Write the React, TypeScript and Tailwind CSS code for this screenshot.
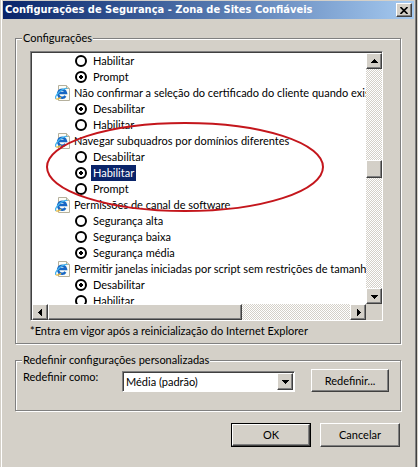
import type { ReactNode } from "react";

type Option = { label: string; checked?: boolean; selected?: boolean };
type Setting = { id: string; title?: string; options: Option[] };

const settings: Setting[] = [
    {
        id: "anterior",
        options: [{ label: "Habilitar" }, { label: "Prompt", checked: true }],
    },
    {
        id: "certificado",
        title: "Não confirmar a seleção do certificado do cliente quando exis",
        options: [{ label: "Desabilitar", checked: true }, { label: "Habilitar" }],
    },
    {
        id: "subquadros",
        title: "Navegar subquadros por domínios diferentes",
        options: [
            { label: "Desabilitar" },
            { label: "Habilitar", checked: true, selected: true },
            { label: "Prompt" },
        ],
    },
    {
        id: "canal",
        title: "Permissões de canal de software",
        options: [
            { label: "Segurança alta" },
            { label: "Segurança baixa" },
            { label: "Segurança média", checked: true },
        ],
    },
    {
        id: "janelas",
        title: "Permitir janelas iniciadas por script sem restrições de tamanho",
        options: [{ label: "Desabilitar", checked: true }, { label: "Habilitar" }],
    },
];

const raised =
    "bg-[#d4d0c8] border border-t-white border-l-white border-r-[#404040] border-b-[#404040] shadow-[inset_-1px_-1px_0_#808080]";
const track = "bg-[repeating-conic-gradient(#ffffff_0_25%,#d4d0c8_0_50%)] bg-[length:2px_2px]";

function PageIcon() {
    return (
        <svg viewBox="0 0 16 16" className="size-4 shrink-0" aria-hidden="true">
            <path d="M3.5 .5h8l3 3v12h-11z" fill="#fdfdf6" stroke="#b5b09c" />
            <path d="M11.5 .5v3h3" fill="#e8e2c8" stroke="#b5b09c" />
            <path
                d="M10.400 11a4 4 0 1 1 .6-3H4"
                fill="none"
                stroke="#1767c4"
                strokeWidth="2.400"
            />
            <path d="M.8 13.800C-.8 10.500 7 3 12.300 3.400" fill="none" stroke="#45b4ee" strokeWidth="1.400" />
            <path d="M.8 13.800c1.500.7 3.700-.3 5.200-1.600" fill="none" stroke="#e3b53b" strokeWidth="1.200" />
        </svg>
    );
}

function Arrow({ direction }: { direction: "up" | "down" | "left" | "right" }) {
    const shapes = {
        up: "M0 5h7L3.500 1z",
        down: "M0 2h7L3.500 6z",
        left: "M5 0v7L1 3.500z",
        right: "M2 0v7L6 3.500z",
    };
    return (
        <svg viewBox="0 0 7 7" className="size-[7px]" shapeRendering="crispEdges" aria-hidden="true">
            <path d={shapes[direction]} />
        </svg>
    );
}

function ScrollButton({ direction, label }: { direction: "up" | "down" | "left" | "right"; label: string }) {
    return (
        <button type="button" aria-label={label} className={`flex size-4 shrink-0 items-center justify-center ${raised}`}>
            <Arrow direction={direction} />
        </button>
    );
}

function Group({ title, children }: { title: string; children: ReactNode }) {
    return (
        <fieldset className="min-w-0 border border-[#808080] px-1.5 shadow-[inset_1px_1px_0_#fff,1px_1px_0_#fff]">
            <legend className="bg-[#d4d0c8] px-px leading-4">{title}</legend>
            {children}
        </fieldset>
    );
}

function SettingRows({ setting }: { setting: Setting }) {
    return (
        <div role="radiogroup" aria-label={setting.title}>
            {setting.title && (
                <div className="flex h-4 items-center gap-[3px] pl-[23px] whitespace-nowrap">
                    <PageIcon />
                    {setting.title}
                </div>
            )}
            {setting.options.map((option) => (
                <label key={option.label} className="flex h-4 items-center gap-1 pl-[43px]">
                    <input
                        type="radio"
                        name={setting.id}
                        defaultChecked={option.checked}
                        className="size-3 shrink-0 appearance-none rounded-full border-2 border-black bg-white checked:bg-[radial-gradient(circle,#000_2px,transparent_2px)]"
                    />
                    <span className={option.selected ? "bg-[#0a246a] px-0.5 text-white" : "px-0.5"}>{option.label}</span>
                </label>
            ))}
        </div>
    );
}

function SettingsList() {
    return (
        <div className="relative mr-[11px] ml-2 border border-t-[#808080] border-l-[#808080] border-r-white border-b-white">
            <div className="grid h-[268px] grid-cols-[minmax(0,1fr)_16px] grid-rows-[minmax(0,1fr)_16px] border-t border-l border-[#404040]">
                <div className="overflow-hidden bg-white">
                    {settings.map((setting) => (
                        <SettingRows key={setting.id} setting={setting} />
                    ))}
                </div>
                <div className={`flex flex-col ${track}`}>
                    <ScrollButton direction="up" label="Rolar para cima" />
                    <div className="grow-[91]" />
                    <div className={`h-[18px] ${raised}`} />
                    <div className="grow-[109]" />
                    <ScrollButton direction="down" label="Rolar para baixo" />
                </div>
                <div className={`flex ${track}`}>
                    <ScrollButton direction="left" label="Rolar para a esquerda" />
                    <div className={`w-[58%] ${raised}`} />
                    <div className="grow" />
                    <ScrollButton direction="right" label="Rolar para a direita" />
                </div>
                <div className="bg-[#d4d0c8]" />
            </div>
            {/* marcação em volta da opção de subquadros */}
            <svg viewBox="0 0 280 92" className="pointer-events-none absolute top-[69px] left-[14px] h-[92px] w-[280px]" aria-hidden="true">
                <ellipse cx="140" cy="46" rx="138" ry="44" fill="none" stroke="#c4161c" strokeWidth="2" />
            </svg>
        </div>
    );
}

export default function App() {
    return (
        <div className="bg-[#d4d0c8] pr-px font-[Lato,'Noto_Sans',sans-serif] text-[11px] leading-4 text-black">
            <div className="min-h-screen border-r border-l border-l-[#d4d0c8] border-r-[#404040] shadow-[inset_1px_0_0_#fff,inset_-1px_0_0_#808080] pr-0.5 pl-0.5 pt-px">
                <header className="flex h-[18px] items-center justify-between bg-linear-to-r from-[#0a246a] to-[#a6caf0] px-0.5">
                    <h1 className="font-['DejaVu_Sans_Condensed','Noto_Sans',sans-serif] font-bold whitespace-nowrap text-white">
                        Configurações de Segurança - Zona de Sites Confiáveis
                    </h1>
                    <button type="button" aria-label="Fechar" className={`flex h-3.5 w-4 items-center justify-center ${raised}`}>
                        <svg viewBox="0 0 8 7" className="h-[7px] w-2" aria-hidden="true">
                            <path d="M.5 0l7 7M7.500 0l-7 7" stroke="#000" strokeWidth="1.600" />
                        </svg>
                    </button>
                </header>

                <main className="pt-[11px] pr-[13px] pl-3">
                    <Group title="Configurações">
                        <div className="h-[5px]" />
                        <SettingsList />
                        <p className="mx-2 pt-0.5 pb-1 whitespace-nowrap">
                            *Entra em vigor após a reinicialização do Internet Explorer
                        </p>
                    </Group>

                    <div className="h-2" />

                    <Group title="Redefinir configurações personalizadas">
                        <div className="flex items-start pt-px pr-[5px] pb-[18px]">
                            <label htmlFor="nivel" className="w-[100px] pl-px">
                                Redefinir como:
                            </label>
                            <div className="relative mt-0.5 h-[21px] min-w-0 flex-1 border border-t-[#808080] border-l-[#808080] border-r-white border-b-white">
                                <select
                                    id="nivel"
                                    className="block h-full w-full appearance-none border-t border-l border-[#404040] bg-white pl-0.5 leading-4"
                                >
                                    <option>Média (padrão)</option>
                                </select>
                                <span className={`pointer-events-none absolute top-px right-px bottom-px flex w-4 items-center justify-center ${raised}`}>
                                    <Arrow direction="down" />
                                </span>
                            </div>
                            <button type="button" className={`ml-4 h-[23px] w-[78px] ${raised}`}>
                                Redefinir...
                            </button>
                        </div>
                    </Group>

                    <div className="flex justify-end gap-[9px] pt-3 pr-px">
                        <button type="button" className="h-6 w-20 border border-black">
                            <span className={`flex h-full items-center justify-center ${raised}`}>OK</span>
                        </button>
                        <button type="button" className={`h-6 w-20 ${raised}`}>
                            Cancelar
                        </button>
                    </div>
                </main>
            </div>
        </div>
    );
}
